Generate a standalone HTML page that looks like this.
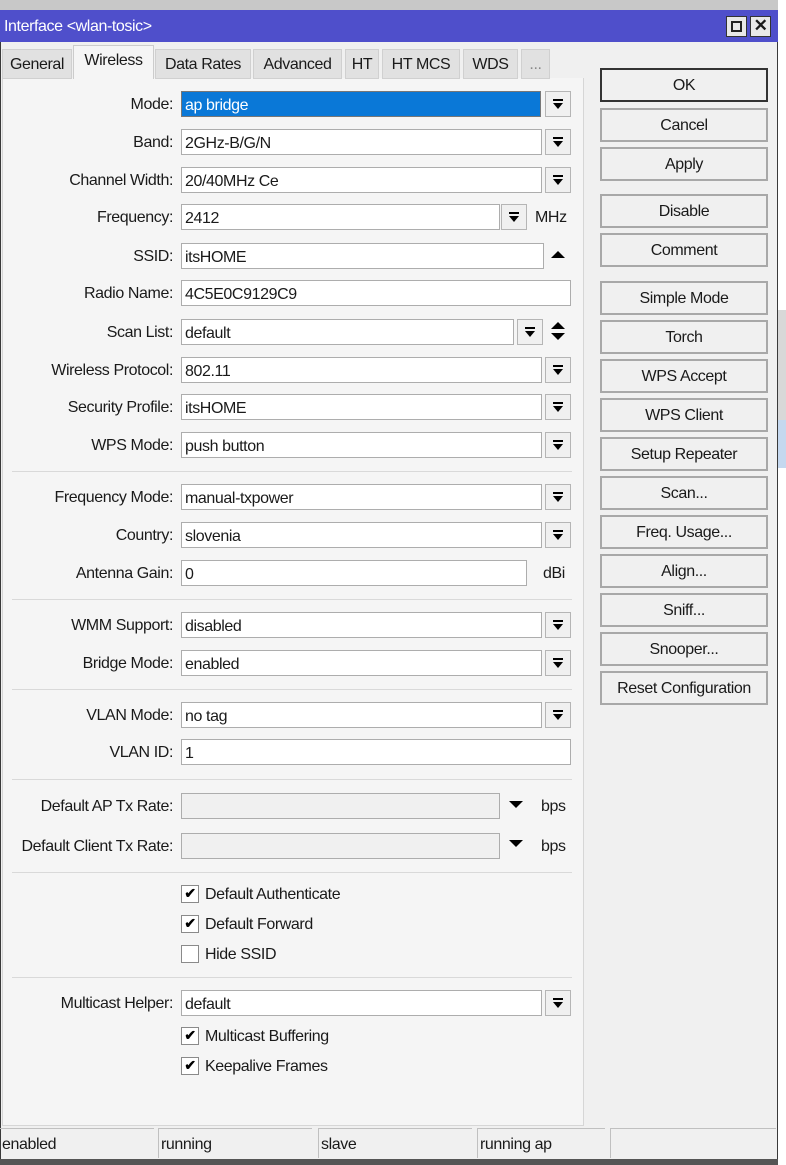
<!DOCTYPE html>
<html><head><meta charset="utf-8"><style>
*{box-sizing:border-box;margin:0;padding:0}
body{width:786px;height:1165px;overflow:hidden;background:#f0f0f0;font-family:"Liberation Sans",Arial,sans-serif;font-size:16px;color:#1a1a1a;position:relative;letter-spacing:-0.4px}
div,span{position:absolute}
.top{left:0;top:0;width:786px;height:12px;background:#c8c8c8}
.win{left:0;top:10px;width:778px;height:1155px;background:#f0f0f0;border:1px solid #3a3a3a}
.tb{left:0;top:10px;width:778px;height:32px;background:#4f4fcb;color:#fff;padding:8px 0 0 4px;font-size:16px}
.wb{top:16px;width:21px;height:21px;background:#e8e8e8;border:1px solid #333}
.tab{top:49px;height:30px;background:#e1e1e1;border:1px solid #d0d0d0;text-align:center;padding-top:6px}
.tab.a{top:45px;height:34px;background:#f5f5f5;border-color:#ccc;border-bottom:none;padding-top:6px}
.panel{left:2px;top:78px;width:582px;height:1048px;background:#f5f5f5;border:1px solid #d6d6d6;border-top:none}
.l{left:0;width:173px;text-align:right;height:26px;line-height:28px}
.i{left:181px;height:26px;background:#fff;border:1px solid #adadad;line-height:27px;padding-left:3px;overflow:hidden;white-space:nowrap}
.g{background:#f0f0f0}
.d{width:26px;height:26px;background:#f0f0f0;border:1px solid #b5b5b5}
.d:after{content:"";position:absolute;left:7px;top:7px;width:10px;height:2px;background:#000}
.d:before{content:"";position:absolute;left:7px;top:11px;border-left:5px solid transparent;border-right:5px solid transparent;border-top:6px solid #000}
.sep{left:12px;width:560px;height:1px;background:#d9d9d9}
.u{height:26px;line-height:28px}
.cb{left:181px;width:18px;height:18px;background:#fff;border:1px solid #8a8a8a;font-size:14px;line-height:15px;text-align:center;font-weight:bold;color:#000}
.ct{left:205px;height:20px;line-height:22px}
.btn{left:600px;width:168px;height:34px;background:#f0f0f0;border:2px solid #a8a8a8;text-align:center;line-height:31px}
.sb{top:1128px;height:30px;border:1px solid #c0c0c0;border-bottom:none;border-right:none;line-height:32px;padding-left:2px}
</style></head><body>
<div class="top"></div>
<div style="left:778px;top:0;width:8px;height:1165px;background:#fff"></div>
<div style="left:778px;top:310px;width:8px;height:110px;background:#d8d8d8"></div>
<div style="left:778px;top:420px;width:8px;height:48px;background:#c5d8ef"></div>
<div class="win"></div>
<div class="tb">Interface &lt;wlan-tosic&gt;</div>
<div class="wb" style="left:726px"><span style="left:4px;top:4px;width:11px;height:11px;border:2px solid #222"></span></div>
<div class="wb" style="left:750px;font-weight:bold;text-align:center;line-height:18px;font-size:17px">✕</div>

<div class="panel"></div>
<div class="tab" style="left:2px;width:70px">General</div>
<div class="tab a" style="left:73px;width:81px">Wireless</div>
<div class="tab" style="left:155px;width:96px">Data Rates</div>
<div class="tab" style="left:253px;width:89px">Advanced</div>
<div class="tab" style="left:345px;width:34px">HT</div>
<div class="tab" style="left:382px;width:78px">HT MCS</div>
<div class="tab" style="left:463px;width:55px">WDS</div>
<div class="tab" style="left:521px;width:29px;color:#888">...</div>

<div class="l" style="top:91px">Mode:</div><div class="i" style="top:91px;width:360px;background:#0a78d7;color:#fff;border-color:#777">ap bridge</div><div class="d" style="left:545px;top:91px"></div>
<div class="l" style="top:129px">Band:</div><div class="i" style="top:129px;width:361px">2GHz-B/G/N</div><div class="d" style="left:545px;top:129px"></div>
<div class="l" style="top:167px">Channel Width:</div><div class="i" style="top:167px;width:361px">20/40MHz Ce</div><div class="d" style="left:545px;top:167px"></div>
<div class="l" style="top:204px">Frequency:</div><div class="i" style="top:204px;width:319px">2412</div><div class="d" style="left:501px;top:204px"></div><div class="u" style="left:535px;top:204px">MHz</div>
<div class="l" style="top:243px">SSID:</div><div class="i" style="top:243px;width:363px">itsHOME</div><span style="left:551px;top:251px;border-left:7px solid transparent;border-right:7px solid transparent;border-bottom:7px solid #000"></span>
<div class="l" style="top:280px">Radio Name:</div><div class="i" style="top:280px;width:390px">4C5E0C9129C9</div>
<div class="l" style="top:319px">Scan List:</div><div class="i" style="top:319px;width:333px">default</div><div class="d" style="left:517px;top:319px"></div><span style="left:551px;top:322px;border-left:7px solid transparent;border-right:7px solid transparent;border-bottom:7px solid #000"></span><span style="left:551px;top:333px;border-left:7px solid transparent;border-right:7px solid transparent;border-top:7px solid #000"></span>
<div class="l" style="top:357px">Wireless Protocol:</div><div class="i" style="top:357px;width:361px">802.11</div><div class="d" style="left:545px;top:357px"></div>
<div class="l" style="top:394px">Security Profile:</div><div class="i" style="top:394px;width:361px">itsHOME</div><div class="d" style="left:545px;top:394px"></div>
<div class="l" style="top:432px">WPS Mode:</div><div class="i" style="top:432px;width:361px">push button</div><div class="d" style="left:545px;top:432px"></div>
<div class="sep" style="top:471px"></div>
<div class="l" style="top:484px">Frequency Mode:</div><div class="i" style="top:484px;width:361px">manual-txpower</div><div class="d" style="left:545px;top:484px"></div>
<div class="l" style="top:522px">Country:</div><div class="i" style="top:522px;width:361px">slovenia</div><div class="d" style="left:545px;top:522px"></div>
<div class="l" style="top:560px">Antenna Gain:</div><div class="i" style="top:560px;width:346px">0</div><div class="u" style="left:543px;top:560px">dBi</div>
<div class="sep" style="top:599px"></div>
<div class="l" style="top:612px">WMM Support:</div><div class="i" style="top:612px;width:361px">disabled</div><div class="d" style="left:545px;top:612px"></div>
<div class="l" style="top:650px">Bridge Mode:</div><div class="i" style="top:650px;width:361px">enabled</div><div class="d" style="left:545px;top:650px"></div>
<div class="sep" style="top:689px"></div>
<div class="l" style="top:702px">VLAN Mode:</div><div class="i" style="top:702px;width:361px">no tag</div><div class="d" style="left:545px;top:702px"></div>
<div class="l" style="top:739px">VLAN ID:</div><div class="i" style="top:739px;width:390px">1</div>
<div class="sep" style="top:779px"></div>
<div class="l" style="top:793px">Default AP Tx Rate:</div><div class="i g" style="top:793px;width:319px"></div><span style="left:509px;top:801px;border-left:7px solid transparent;border-right:7px solid transparent;border-top:7px solid #000"></span><div class="u" style="left:541px;top:793px">bps</div>
<div class="l" style="top:833px">Default Client Tx Rate:</div><div class="i g" style="top:833px;width:319px"></div><span style="left:509px;top:840px;border-left:7px solid transparent;border-right:7px solid transparent;border-top:7px solid #000"></span><div class="u" style="left:541px;top:833px">bps</div>
<div class="sep" style="top:872px"></div>
<div class="cb" style="top:885px">✔</div><div class="ct" style="top:884px">Default Authenticate</div>
<div class="cb" style="top:915px">✔</div><div class="ct" style="top:914px">Default Forward</div>
<div class="cb" style="top:945px"></div><div class="ct" style="top:944px">Hide SSID</div>
<div class="sep" style="top:977px"></div>
<div class="l" style="top:990px">Multicast Helper:</div><div class="i" style="top:990px;width:361px">default</div><div class="d" style="left:545px;top:990px"></div>
<div class="cb" style="top:1027px">✔</div><div class="ct" style="top:1026px">Multicast Buffering</div>
<div class="cb" style="top:1057px">✔</div><div class="ct" style="top:1056px">Keepalive Frames</div>

<div class="btn" style="top:68px;border-color:#333">OK</div>
<div class="btn" style="top:108px">Cancel</div>
<div class="btn" style="top:147px">Apply</div>
<div class="btn" style="top:194px">Disable</div>
<div class="btn" style="top:233px">Comment</div>
<div class="btn" style="top:281px">Simple Mode</div>
<div class="btn" style="top:320px">Torch</div>
<div class="btn" style="top:359px">WPS Accept</div>
<div class="btn" style="top:398px">WPS Client</div>
<div class="btn" style="top:437px">Setup Repeater</div>
<div class="btn" style="top:476px">Scan...</div>
<div class="btn" style="top:515px">Freq. Usage...</div>
<div class="btn" style="top:554px">Align...</div>
<div class="btn" style="top:593px">Sniff...</div>
<div class="btn" style="top:632px">Snooper...</div>
<div class="btn" style="top:671px">Reset Configuration</div>

<div class="sb" style="left:0;width:154px;border-left:none">enabled</div>
<div class="sb" style="left:158px;width:154px">running</div>
<div class="sb" style="left:318px;width:154px">slave</div>
<div class="sb" style="left:477px;width:128px">running ap</div>
<div class="sb" style="left:610px;width:166px"></div>
<div style="left:0;top:1159px;width:778px;height:6px;background:#555"></div>
</body></html>
